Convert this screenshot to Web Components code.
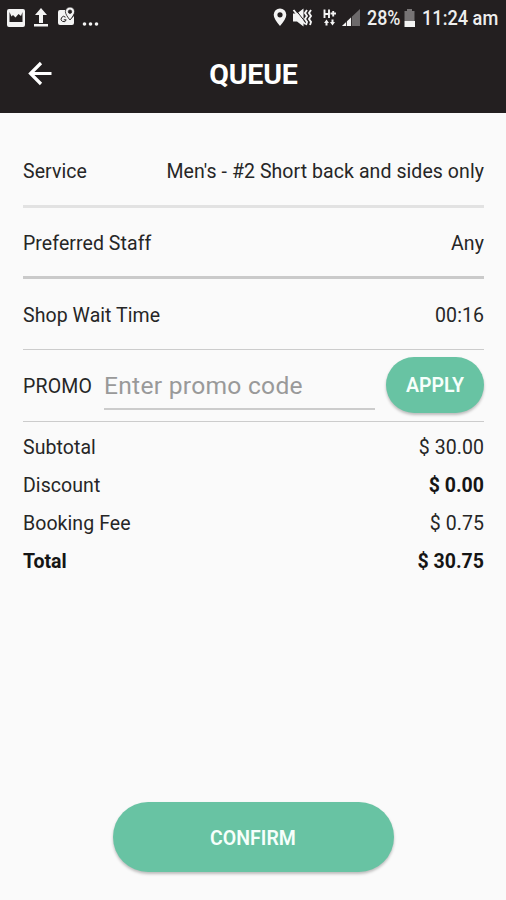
<!DOCTYPE html>
<html lang="en">
<head>
<meta charset="utf-8">
<title>Queue</title>
<style>
html, body { margin: 0; height: 100%; background: #fafafa; font-family: Roboto, "Liberation Sans", sans-serif; }
</style>
</head>
<body>
<queue-screen></queue-screen>
<script>
const define = (name, html) => customElements.define(name, class extends HTMLElement {
  constructor() {
    super();
    const t = document.createElement('template');
    t.innerHTML = html;
    this.attachShadow({ mode: 'open' }).append(t.content.cloneNode(true));
  }
});

define('status-bar', `
<style>
:host { display: flex; justify-content: space-between; height: 36px; color: #eee; font-size: 21px; line-height: 37px; white-space: pre; }
svg { display: block; flex: none; }
.right { display: flex; padding-right: 8px; }
.pct, .time { transform-origin: 0 50%; font-weight: 500; }
.pct { width: 34px; transform: scaleX(.85); }
.time { width: 76px; transform: scaleX(.865); }
</style>
<svg width="110" height="36" viewBox="0 0 110 36">
  <path fill="#f4f4f4" fill-rule="evenodd" d="M9 9h14q2 0 2 2v14q0 2-2 2H9q-2 0-2-2V11q0-2 2-2zM9.500 12V22h13V12l-1.500 4-2.500-2-3 3.500-2.500-2.500-1.500 1.500z"/>
  <path fill="#f4f4f4" d="M41 8l6 7h-4v8h-4v-8h-4zM34 24h14v2.500H34z"/>
  <path fill="#f4f4f4" d="M60 10h7c-1 4 0 7 3 10l4-4v7q0 2-2 2H60q-2 0-2-2V12q0-2 2-2z"/>
  <path fill="#f4f4f4" stroke="#231f20" stroke-width=".8" fill-rule="evenodd" d="M70 7a4.600 4.600 0 0 1 4.600 4.600q0 3-4.600 8.400-4.600-5.400-4.600-8.400A4.600 4.600 0 0 1 70 7zm0 3a1.700 1.700 0 1 0 0 3.400 1.700 1.700 0 0 0 0-3.400z"/>
  <path d="M65.500 17.200a2.600 2.600 0 1 0 .7 2.600h-2.400" fill="none" stroke="#231f20" stroke-width="1"/>
  <g fill="#f4f4f4"><circle cx="84.500" cy="24" r="1.800"/><circle cx="90.500" cy="24" r="1.800"/><circle cx="96.500" cy="24" r="1.800"/></g>
</svg>
<div class="right">
  <svg width="97" height="36" viewBox="270 0 97 36">
    <path fill="#f4f4f4" fill-rule="evenodd" d="M280 8.500a6.300 6.300 0 0 1 6.300 6.300q0 4-6.300 11.200-6.300-7.200-6.300-11.200A6.300 6.300 0 0 1 280 8.500zm0 3.700a2.600 2.600 0 1 0 0 5.200 2.600 2.600 0 0 0 0-5.200z"/>
    <path fill="#f4f4f4" d="M293 13.500h4l6.500-5v18l-6.500-5h-4z"/>
    <path fill="none" stroke="#231f20" stroke-width="1" d="M295 9l11 14"/>
    <path fill="none" stroke="#f4f4f4" stroke-width="1.900" d="M293.500 10l11.500 14M307 10l-2 3 2 3-2 3 2 3-1 3M311 10l-2 3 2 3-2 3 2 3-1 3"/>
    <path fill="none" stroke="#f4f4f4" stroke-width="1.900" d="M324.500 9.500v8.500M329 9.500v8.500M324.500 14h4.500M330.500 13.500h5.500M333.200 11v5.500"/>
    <path fill="#f4f4f4" d="M324 23l2.500-3.500 2.500 3.500h-1.500v2.500h-2v-2.500zM330 22h1.500v-2.500h2v2.500h1.500l-2.500 3.500z"/>
    <path fill="#6c696a" d="M342 26l18-17v17z"/>
    <path fill="#f4f4f4" d="M342 26l9-8.500V26z"/>
    <path stroke="#231f20" stroke-width=".8" d="M346.500 18v8M351.500 15v11"/>
  </svg>
  <span class="pct">28%</span>
  <svg width="21" height="36" viewBox="401 0 21 36">
    <path fill="#777475" d="M404.500 11h2.500V9h5v2h2.500v10h-10z"/><path fill="#f4f4f4" d="M404.500 21h10.500v6h-10.500z"/>
  </svg>
  <span class="time">11:24 am</span>
</div>`);

define('title-bar', `
<style>
:host { display: grid; grid-template-columns: 79px 1fr 79px; align-items: center; height: 77px; color: #fff; }
h1 { margin: 0; text-align: center; font-size: 28.500px; line-height: 34px; font-weight: 700; letter-spacing: -.15px; padding: 1px 0 0 1px; }
svg { display: block; }
</style>
<svg width="79" height="77" viewBox="0 36 79 77"><path d="M51.500 73.500H30.500M41 63L30.500 73.500 41 84" fill="none" stroke="#fff" stroke-width="3.200"/></svg>
<h1><slot></slot></h1>`);

define('detail-row', `
<style>
:host { display: flex; justify-content: space-between; align-items: center; box-sizing: border-box; height: 72px; border-bottom: var(--line, 1.500px solid #d0d0d0); font-size: 19.500px; letter-spacing: .07px; line-height: 24px; color: #262626; white-space: pre; }
</style>
<slot name="label"></slot><slot></slot>`);

define('round-button', `
<style>
:host { display: block; }
button { display: block; box-sizing: border-box; width: 100%; height: 100%; border: 0; padding: 2px 0 0; border-radius: 99px; background: #68c3a3; color: #f6fffb; font: 600 19.500px Roboto, sans-serif; box-shadow: 0 2px 3px rgba(0,0,0,.25); }
</style>
<button><slot></slot></button>`);

define('promo-row', `
<style>
:host { display: flex; align-items: center; box-sizing: border-box; height: 72px; border-bottom: 1px solid #ccc; color: #262626; }
.label { width: 81px; padding-top: 2px; font-size: 19.500px; letter-spacing: .2px; }
.field { box-sizing: border-box; width: 271px; height: 48px; margin: 0 11px 11px 0; border-bottom: 2px solid #ccc; font-size: 24.600px; letter-spacing: .27px; line-height: 48px; color: #999; align-self: flex-end; white-space: pre; }
round-button { width: 98px; height: 56px; margin-bottom: 2px; }
</style>
<span class="label">PROMO</span><div class="field"><span class="ph">Enter promo code</span></div><round-button>APPLY</round-button>`);

define('queue-screen', `
<style>
:host { display: flex; flex-direction: column; height: 900px; overflow: hidden; }
header { background: #231f20; height: 113px; }
main { padding: 22px 22px 0 23px; display: flex; flex-direction: column; }
.details { display: flex; flex-direction: column; }
.details detail-row { padding-top: 3px; }
.sum { display: flex; flex-direction: column; padding-top: 7px; }
.sum detail-row { height: 38px; --line: 0; }
b { font-weight: 700; letter-spacing: 0; color: #151515; }
footer { margin-top: auto; padding-bottom: 28px; display: flex; justify-content: center; }
footer round-button { width: 281px; height: 70px; }
</style>
<header><status-bar></status-bar><title-bar>QUEUE</title-bar></header>
<main>
  <div class="details">
    <detail-row style="height:73px;--line:3px solid #e2e2e2"><span slot="label">Service</span><span>Men's - #2 Short back and sides only</span></detail-row>
    <detail-row style="height:71px;--line:3px solid #cacaca"><span slot="label">Preferred Staff</span><span>Any</span></detail-row>
    <detail-row style="height:71px;--line:1px solid #ccc"><span slot="label">Shop Wait Time</span><span>00:16</span></detail-row>
  </div>
  <promo-row></promo-row>
  <div class="sum">
    <detail-row><span slot="label">Subtotal</span><span>$ 30.00</span></detail-row>
    <detail-row><span slot="label">Discount</span><b>$ 0.00</b></detail-row>
    <detail-row><span slot="label">Booking Fee</span><span>$ 0.75</span></detail-row>
    <detail-row><b slot="label">Total</b><b>$ 30.75</b></detail-row>
  </div>
</main>
<footer><round-button>CONFIRM</round-button></footer>`);
</script>
</body>
</html>
